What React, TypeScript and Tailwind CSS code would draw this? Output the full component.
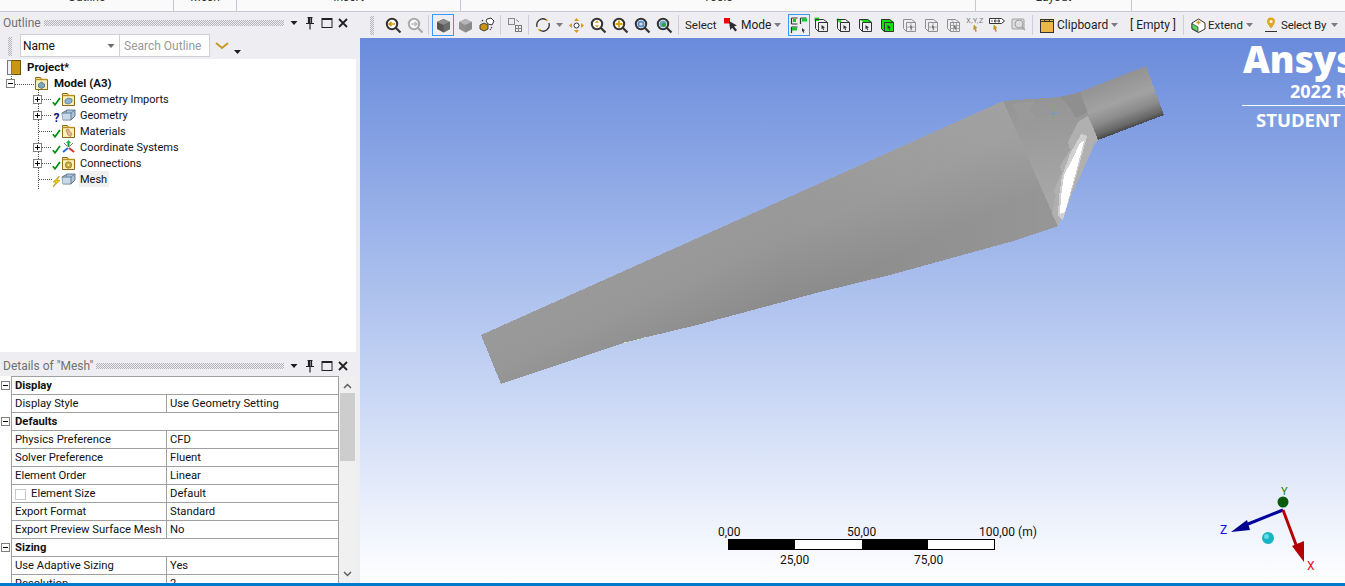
import type { ReactNode } from 'react';

const Caret = ({ color = '#1e1e1e', w = 7 }: { color?: string; w?: number }) => (
  <svg width={w} height={4} viewBox="0 0 7 4" className="shrink-0">
    <path d="M0 0h7L3.5 4z" fill={color} />
  </svg>
);

const Dots = ({ className }: { className: string }) => (
  <div
    className={`bg-[conic-gradient(#b4b4bc_25%,transparent_0_50%,#b4b4bc_0_75%,transparent_0)] bg-[length:2px_2px] ${className}`}
  />
);

const PanelHeader = ({ title, dotsWidth }: { title: string; dotsWidth: string }) => (
  <div className="flex h-[21px] shrink-0 items-center pl-[3px] text-[12px] text-[#717171]">
    <span className="whitespace-nowrap">{title}</span>
    <div className="flex-1" />
    <Dots className={`h-[6px] ${dotsWidth}`} />
    <div className="ml-[3px] flex w-[14px] justify-center">
      <Caret w={8} />
    </div>
    <svg width={16} height={14} viewBox="0 0 16 14" className="ml-[1px]">
      <path d="M5.5 1.5h5M6.5 1.5v6M9.5 1.5v6M4 7.5h8M8 7.5v6" stroke="#222" strokeWidth="1.2" fill="none" />
      <path d="M6.5 2h2v5h-2z" fill="#222" />
    </svg>
    <svg width={14} height={12} viewBox="0 0 14 12" className="ml-[2px]">
      <rect x="2" y="1.5" width="10" height="9" fill="none" stroke="#222" strokeWidth="1" />
      <path d="M2 2h10" stroke="#222" strokeWidth="2" />
    </svg>
    <svg width={12} height={12} viewBox="0 0 12 12" className="ml-[3px] mr-[11px]">
      <path d="M2 2l8 8M10 2l-8 8" stroke="#222" strokeWidth="1.8" />
    </svg>
  </div>
);

const FolderIcon = ({ children }: { children?: ReactNode }) => (
  <svg width={15} height={15} viewBox="0 0 15 15">
    <path d="M1.5 3.5V1.5h5l1 2h6v10h-12z" fill="#fbeeb8" stroke="#8a6a12" strokeWidth="1" />
    <path d="M1.5 3.5h12" stroke="#b98f1a" strokeWidth="1.4" />
    {children}
  </svg>
);

const StatusCheck = () => (
  <svg width={9} height={9} viewBox="0 0 9 9" className="mt-[6px]">
    <path d="M0.8 5.2L3 7.8 8 1" stroke="#0a8a12" strokeWidth="1.7" fill="none" />
  </svg>
);

const ModelBox = () => (
  <svg width={15} height={12} viewBox="0 0 15 12">
    <path d="M1 4l5-3h8v6l-4 4H2z" fill="#a9c3de" stroke="#5e7282" strokeWidth="0.9" />
    <path d="M1.5 4.5h8v6h-8z" fill="#c8d9ea" />
    <path d="M1 4h9v7M10 4l4-3M5.5 1.5v2" stroke="#5e7282" strokeWidth="0.8" fill="none" />
  </svg>
);

type TreeItem = { label: string; plus: boolean; status: ReactNode; icon: ReactNode; active?: boolean };

const treeItems: TreeItem[] = [
  {
    label: 'Geometry Imports',
    plus: true,
    status: <StatusCheck />,
    icon: (
      <FolderIcon>
        <path d="M4 8l3-2 4 1v3l-3 2-4-1z" fill="#8db3d4" stroke="#50708a" strokeWidth="0.7" />
      </FolderIcon>
    ),
  },
  {
    label: 'Geometry',
    plus: true,
    status: <span className="mt-[5px] text-[12px] font-bold leading-none text-[#101080]">?</span>,
    icon: <ModelBox />,
  },
  {
    label: 'Materials',
    plus: false,
    status: <StatusCheck />,
    icon: (
      <FolderIcon>
        <path d="M5 6l2-1 4 5-1.5 2.5L7 11z" fill="#e5b491" stroke="#a0714d" strokeWidth="0.6" />
      </FolderIcon>
    ),
  },
  {
    label: 'Coordinate Systems',
    plus: true,
    status: <StatusCheck />,
    icon: (
      <svg width={15} height={15} viewBox="0 0 15 15">
        <path d="M7.5 7V2" stroke="#0c9c2a" strokeWidth="2" />
        <path d="M5 3l2.5-3L10 3z" fill="#12b83a" />
        <path d="M7 8L2 12" stroke="#2a6fd6" strokeWidth="2" />
        <path d="M8 8l5 4" stroke="#d8322a" strokeWidth="2" />
        <path d="M3 3l3 3M12 3L9 6" stroke="#777" strokeWidth="1" />
      </svg>
    ),
  },
  {
    label: 'Connections',
    plus: true,
    status: <StatusCheck />,
    icon: (
      <FolderIcon>
        <circle cx="7.5" cy="9" r="3.2" fill="#c9a93c" stroke="#8a7420" strokeWidth="0.7" />
        <circle cx="7.5" cy="9" r="1" fill="#fbeeb8" />
      </FolderIcon>
    ),
  },
  {
    label: 'Mesh',
    plus: false,
    status: (
      <svg width={9} height={11} viewBox="0 0 9 11" className="mt-[5px]">
        <path d="M7.5 0L1 6h3L1 11l7-6.5H5z" fill="#f2d21e" stroke="#a68c00" strokeWidth="0.6" />
      </svg>
    ),
    icon: <ModelBox />,
    active: true,
  },
];

const ExpandBox = ({ sign }: { sign: 'plus' | 'minus' }) => (
  <span className="relative flex h-[9px] w-[9px] items-center justify-center border border-[#808080] bg-white">
    <span className="h-px w-[5px] bg-black" />
    {sign === 'plus' && <span className="absolute h-[5px] w-px bg-black" />}
  </span>
);

const Tree = () => (
  <div className="relative ml-0 h-[293px] w-[356px] bg-white text-[11px] text-[#111]">
    <svg width={80} height={130} className="absolute left-0 top-0">
      <path
        d="M11.5 15v10M15 25.5h19M38.5 31v105M42 40.5h10M42 56.5h10M38.5 72.5h13M42 88.5h10M42 104.5h10M38.5 120.5h13"
        stroke="#555"
        strokeWidth="1"
        strokeDasharray="1 1"
        shapeRendering="crispEdges"
        fill="none"
      />
    </svg>
    <div className="relative flex h-4 items-center pl-[7px]">
      <svg width={14} height={15} viewBox="0 0 14 15">
        <rect x="0.5" y="0.5" width="13" height="14" fill="#c8980f" stroke="#6b5208" />
        <rect x="0.5" y="0.5" width="4" height="14" fill="#f1f1f1" stroke="#777" />
      </svg>
      <span className="ml-[6px] text-[11.5px] font-bold leading-[17px]">Project*</span>
    </div>
    <div className="relative flex h-4 items-center pl-[6px]">
      <ExpandBox sign="minus" />
      <div className="ml-[19px]">
        <FolderIcon>
          <path d="M4.5 8l3-2 3 2v3l-3 1.5-3-1.5z" fill="#7fa4c4" stroke="#40607a" strokeWidth="0.7" />
        </FolderIcon>
      </div>
      <span className="ml-[5px] text-[11.5px] font-bold leading-[17px]">Model (A3)</span>
    </div>
    {treeItems.map((item) => (
      <div key={item.label} className="relative flex h-4 items-center">
        <div className="flex w-[52px] shrink-0 pl-[33px]">{item.plus && <ExpandBox sign="plus" />}</div>
        <div className="flex h-4 w-[9px] shrink-0 justify-center">{item.status}</div>
        <div className="flex w-[18px] shrink-0 items-center">{item.icon}</div>
        <span className={`h-4 whitespace-nowrap pl-px pr-[2px] pt-px leading-4 ${item.active ? 'bg-[#f0f0f0]' : ''}`}>
          {item.label}
        </span>
      </div>
    ))}
  </div>
);

const OutlineToolbar = () => (
  <div className="flex h-[26px] shrink-0 items-start pt-px text-[12px]">
    <Dots className="ml-[8px] mt-[3px] h-[19px] w-[4px]" />
    <div className="ml-[8px] flex h-[23px] w-[100px] items-center justify-between border border-[#cfcfd6] bg-white pl-[2px] pr-[4px] text-[#111]">
      <span>Name</span>
      <Caret color="#6d6d6d" w={8} />
    </div>
    <div className="flex h-[23px] w-[90px] items-center border border-l-0 border-[#cfcfd6] bg-white pl-[4px] text-[#9a9a9a]">
      Search Outline
    </div>
    <svg width={14} height={8} viewBox="0 0 14 8" className="ml-[5px] mt-[8px]">
      <path d="M1 1l6 5 6-5" stroke="#c8971f" strokeWidth="1.8" fill="none" />
    </svg>
    <div className="ml-[5px] mt-[16px]">
      <Caret w={7} />
    </div>
  </div>
);

const detailRows: { section?: string; label?: string; value?: string; check?: boolean }[] = [
  { section: 'Display' },
  { label: 'Display Style', value: 'Use Geometry Setting' },
  { section: 'Defaults' },
  { label: 'Physics Preference', value: 'CFD' },
  { label: 'Solver Preference', value: 'Fluent' },
  { label: 'Element Order', value: 'Linear' },
  { label: 'Element Size', value: 'Default', check: true },
  { label: 'Export Format', value: 'Standard' },
  { label: 'Export Preview Surface Mesh', value: 'No' },
  { section: 'Sizing' },
  { label: 'Use Adaptive Sizing', value: 'Yes' },
  { label: 'Resolution', value: '2' },
];

const DetailsTable = () => (
  <div className="flex min-h-0 flex-1 overflow-hidden bg-white text-[11.25px] text-[#111]">
    <div className="w-[339px] shrink-0">
      {detailRows.map((row) => (
        <div key={row.section ?? row.label} className="flex h-[18px]">
          <div className="flex w-[11px] shrink-0 items-center pl-px">
            {row.section && <ExpandBox sign="minus" />}
          </div>
          {row.section ? (
            <div className="flex flex-1 items-center border-l border-r border-t border-[#a0a0a0] pl-[3px] pt-px font-bold">
              {row.section}
            </div>
          ) : (
            <div className="flex flex-1 border-l border-r border-t border-[#a0a0a0]">
              <div className="flex w-[155px] shrink-0 items-center whitespace-nowrap border-r border-[#a0a0a0] pl-[3px] pt-px">
                {row.check && <span className="mr-[5px] h-[11px] w-[11px] border border-[#c8c8c8] bg-white" />}
                {row.label}
              </div>
              <div className="flex items-center pl-[3px] pt-px">{row.value}</div>
            </div>
          )}
        </div>
      ))}
    </div>
    <div className="flex w-[17px] shrink-0 flex-col items-center bg-[#f0f0f0]">
      <svg width={9} height={6} viewBox="0 0 9 6" className="mt-[7px]">
        <path d="M1 5l3.5-3.5L8 5" stroke="#606060" strokeWidth="1.5" fill="none" />
      </svg>
      <div className="mt-[4px] h-[68px] w-[15px] bg-[#cdcdcd]" />
      <div className="flex-1" />
      <svg width={9} height={6} viewBox="0 0 9 6" className="mb-[6px]">
        <path d="M1 1l3.5 3.5L8 1" stroke="#606060" strokeWidth="1.5" fill="none" />
      </svg>
    </div>
    <div className="flex-1 bg-[#eeeef2]" />
  </div>
);

const Btn = ({ children, selected }: { children?: ReactNode; selected?: boolean }) => (
  <div
    className={`flex h-[22px] w-[22px] shrink-0 items-center justify-center ${
      selected ? 'border border-[#3399ff]' : ''
    }`}
  >
    {children}
  </div>
);

const Sep = () => <div className="ml-[2px] mr-[3px] h-[20px] w-px shrink-0 bg-[#cccedb]" />;

const Lens = ({ children, dim }: { children?: ReactNode; dim?: boolean }) => (
  <svg width={17} height={17} viewBox="0 0 17 17">
    <circle cx="7" cy="7" r="5.2" fill="#fff" stroke={dim ? '#a8a8a8' : '#333'} strokeWidth="2" />
    <path d="M11 11l4.5 4.5" stroke={dim ? '#a8a8a8' : '#333'} strokeWidth="2.2" />
    {children}
  </svg>
);

const Cube = ({ fill = '#555', top = '#8c8c8c', side = '#6c6c6c' }: { fill?: string; top?: string; side?: string }) => (
  <svg width={15} height={15} viewBox="0 0 15 15">
    <path d="M7.5 1L14 4v7l-6.5 3.5L1 11V4z" fill={fill} />
    <path d="M7.5 1L14 4 7.5 7 1 4z" fill={top} />
    <path d="M7.5 7L14 4v7l-6.5 3.5z" fill={side} />
  </svg>
);

type FilterKind = 'vertex' | 'edge' | 'face' | 'body';

const FilterCube = ({ kind }: { kind: FilterKind }) => (
  <svg width={15} height={16} viewBox="0 0 15 16">
    {kind === 'body' && <path d="M1 2h9l4 3v10H4l-3-3z" fill="#12e012" />}
    {kind === 'face' && <path d="M1 2h9l4 3H5z" fill="#12e012" />}
    {kind === 'edge' && <path d="M1 2l4 3" stroke="#12e012" strokeWidth="2.4" />}
    {kind === 'vertex' && <rect x="0.5" y="0.5" width="4.5" height="3.5" fill="#12e012" />}
    <path d="M1.5 2.5h8l4 3v9h-9l-3-3zM4.5 5.5h9M4.5 5.5v9" fill="none" stroke="#333" strokeWidth="1" />
    <path d="M7.5 8l3.5 2.5-1.6.4.8 2-.9.3-.8-2-1 1z" fill="#333" />
  </svg>
);

const MeshCube = ({ lines = 1 }: { lines?: number }) => (
  <svg width={15} height={16} viewBox="0 0 15 16">
    <path d="M1.5 2.5h8l4 3v9h-9l-3-3zM4.5 5.5h9M4.5 5.5v9" fill="none" stroke="#8f8f8f" strokeWidth="1" />
    <path
      d={lines === 1 ? 'M9 5.5v9M4.5 10h9' : 'M7.5 5.5v9M10.5 5.5v9M4.5 8.5h9M4.5 11.5h9M5 2.5l3 3'}
      fill="none"
      stroke="#a0a0a0"
      strokeWidth="0.9"
    />
    <path d="M8 8l3 2.5-1.4.3.7 1.8-.8.3-.7-1.8-.8.8z" fill="#777" />
  </svg>
);

const Arrowish = ({ x }: { x: number }) => (
  <path d={`M${x} 8l3 3-1.3.3.8 3-1 .4-.9-3-1 .9z`} fill="#d69a10" stroke="#8a6200" strokeWidth="0.3" />
);

const MainToolbar = () => (
  <div className="flex h-[26px] shrink-0 items-center whitespace-nowrap text-[12px] text-[#1e1e1e]">
    <Dots className="ml-[10px] mr-[8px] h-[19px] w-[4px] shrink-0" />
    <Btn>
      <Lens>
        <path d="M10 7H4.5M6.5 4.8L4 7l2.5 2.2" stroke="#d99a12" strokeWidth="1.7" fill="none" />
      </Lens>
    </Btn>
    <Btn>
      <Lens dim>
        <path d="M4 7h5.5M7.5 4.8L10 7 7.5 9.2" stroke="#bdbdbd" strokeWidth="1.7" fill="none" />
      </Lens>
    </Btn>
    <Sep />
    <Btn selected>
      <Cube />
    </Btn>
    <Btn>
      <Cube fill="#909090" top="#b5b5b5" side="#8a8a8a" />
    </Btn>
    <Btn>
      <svg width={16} height={16} viewBox="0 0 16 16">
        <path d="M1 8l4-2 4 2v4l-4 2-4-2z" fill="#c8940f" stroke="#333" strokeWidth="0.9" />
        <path d="M8 2l4-1 3 3-2 4-4-1-2-3z" fill="#fff" stroke="#333" strokeWidth="1" />
        <path d="M4 3L2 5M13 10l-2 3" stroke="#333" strokeWidth="1.2" strokeDasharray="1.5 1" />
      </svg>
    </Btn>
    <Sep />
    <Btn>
      <svg width={16} height={16} viewBox="0 0 16 16">
        <rect x="1.5" y="1.5" width="6" height="6" fill="none" stroke="#888" />
        <rect x="8.5" y="8.5" width="6" height="6" fill="none" stroke="#777" />
        <path d="M8.5 11.5h6M11.5 8.5v6M9 2.5l3 2.5" stroke="#888" fill="none" />
      </svg>
    </Btn>
    <Sep />
    <Btn>
      <svg width={16} height={16} viewBox="0 0 16 16">
        <path d="M2.2 10A6 6 0 0 1 11 2.8" stroke="#333" strokeWidth="1.3" fill="none" />
        <path d="M13.8 6A6 6 0 0 1 5 13.2" stroke="#333" strokeWidth="1.3" fill="none" />
        <path d="M11 1.5l2.5 2-3 .8zM5 14.5l-2.5-2 3-.8z" fill="#d99a12" />
      </svg>
    </Btn>
    <div className="flex w-[11px] shrink-0 justify-center">
      <Caret color="#7b7b88" />
    </div>
    <Btn>
      <svg width={15} height={15} viewBox="0 0 15 15">
        <path d="M7.5 0l2.5 3H5zM7.5 15L5 12h5zM0 7.5L3 5v5zM15 7.5L12 5v5z" fill="#d99a12" />
        <circle cx="7.5" cy="7.5" r="2.5" fill="#fff" stroke="#333" strokeWidth="1" />
      </svg>
    </Btn>
    <Btn>
      <Lens>
        <path d="M7 3.5L5 5.8h4zM7 10.5L5 8.2h4z" fill="#d99a12" />
      </Lens>
    </Btn>
    <Btn>
      <Lens>
        <path d="M7 3.5v7M3.5 7h7" stroke="#e0a010" strokeWidth="2.2" />
      </Lens>
    </Btn>
    <Btn>
      <Lens>
        <circle cx="7" cy="7" r="3.6" fill="#5b8fc7" />
        <circle cx="7" cy="7" r="1.6" fill="#cfe0ef" />
      </Lens>
    </Btn>
    <Btn>
      <Lens>
        <circle cx="7" cy="7" r="3.6" fill="#6aa7c9" />
        <circle cx="7.8" cy="7.8" r="2" fill="#2ea12e" />
      </Lens>
    </Btn>
    <div className="ml-[3px] mr-[6px] h-[20px] w-px shrink-0 bg-[#cccedb]" />
    <span className="w-[32px] shrink-0 pt-px text-[11.5px]">Select</span>
    <svg width={15} height={14} viewBox="0 0 15 14" className="ml-[7px] shrink-0">
      <rect x="0" y="0" width="6" height="5.5" fill="#f00000" />
      <path d="M5 3l8 4.5-3 1 3 3.5-1.8 1.5-3-3.7-2 2.2z" fill="#2c2c2c" />
    </svg>
    <span className="ml-[2px] w-[30px] shrink-0">Mode</span>
    <div className="ml-[3px] mr-[7px] shrink-0">
      <Caret color="#7b7b88" />
    </div>
    <Btn selected>
      <svg width={18} height={18} viewBox="0 0 18 18">
        <path d="M1.5 2h6M1.5 2v6M1.5 8h6M10.5 2h6M10.5 2v6M1.5 11h6M1.5 11v6" stroke="#333" strokeWidth="1.2" fill="none" />
        <path d="M3 3h3v3H3zM12 2.5h5v3h-5zM2 11.5h5v3H2z" fill="#12c82a" />
        <path d="M12 12l3 2.5-1.3.3.6 1.8-.8.3-.6-1.8-.9.8z" fill="#333" />
      </svg>
    </Btn>
    <Btn>
      <FilterCube kind="vertex" />
    </Btn>
    <Btn>
      <FilterCube kind="edge" />
    </Btn>
    <Btn>
      <FilterCube kind="face" />
    </Btn>
    <Btn>
      <FilterCube kind="body" />
    </Btn>
    <Btn>
      <MeshCube />
    </Btn>
    <Btn>
      <MeshCube />
    </Btn>
    <Btn>
      <MeshCube lines={2} />
    </Btn>
    <Btn>
      <div className="relative flex h-[16px] w-[16px] justify-center">
        <span className="text-[7px] leading-[9px] tracking-[0.5px] text-[#777]">X,Y,Z</span>
        <svg width={16} height={16} viewBox="0 0 16 16" className="absolute left-0 top-0">
          <Arrowish x={7} />
        </svg>
      </div>
    </Btn>
    <Btn>
      <svg width={16} height={16} viewBox="0 0 16 16">
        <path d="M0.5 1.5h12l3 2.5-3 2.5h-12z" fill="#fff" stroke="#333" strokeWidth="1" />
        <path d="M3 3v2M5.5 3h1.5v2h-1.5zM9 3h1.5v2H9z" stroke="#333" strokeWidth="0.8" fill="none" />
        <Arrowish x={5} />
      </svg>
    </Btn>
    <Btn>
      <svg width={16} height={16} viewBox="0 0 16 16">
        <rect x="1" y="2" width="12" height="10" rx="1" fill="#ddd" stroke="#a0a0a0" />
        <circle cx="8" cy="7" r="4" fill="none" stroke="#a0a0a0" />
        <path d="M11 10l3 3" stroke="#a0a0a0" strokeWidth="1.6" />
      </svg>
    </Btn>
    <Sep />
    <svg width={14} height={15} viewBox="0 0 14 15" className="ml-[4px] shrink-0">
      <rect x="0.5" y="1.5" width="13" height="13" fill="#e8b94a" stroke="#333" />
      <path d="M0.5 3.5h13M4.5 1.5h5v2h-5z" stroke="#333" fill="#d2a030" />
    </svg>
    <span className="ml-[3px] w-[52px] shrink-0">Clipboard</span>
    <div className="ml-[2px] shrink-0">
      <Caret color="#7b7b88" />
    </div>
    <span className="ml-[12px] w-[47px] shrink-0">[ Empty ]</span>
    <div className="ml-[6px] h-[20px] w-px shrink-0 bg-[#cccedb]" />
    <svg width={15} height={15} viewBox="0 0 15 15" className="ml-[7px] shrink-0">
      <path d="M1 5l6.5-4L14 5v6l-6.5 3.5L1 11z" fill="#fff" stroke="#333" strokeWidth="1" />
      <path d="M1 5.5l6 3.5v5l-6-3.5z" fill="#5fd35f" stroke="#333" strokeWidth="0.7" />
      <path d="M7.5 2.5v4M5.5 4.5h4" stroke="#d99a12" strokeWidth="1.3" />
    </svg>
    <span className="ml-[2px] w-[36px] shrink-0 pt-px text-[11.5px]">Extend</span>
    <div className="ml-[2px] shrink-0">
      <Caret color="#7b7b88" />
    </div>
    <svg width={14} height={16} viewBox="0 0 14 16" className="ml-[11px] shrink-0">
      <path d="M7 0.5a4 4 0 0 1 4 4c0 2.5-4 7-4 7s-4-4.5-4-7a4 4 0 0 1 4-4z" fill="#e0a81e" />
      <circle cx="7" cy="4.5" r="1.5" fill="#fff" />
      <path d="M1 14.5h12" stroke="#333" strokeWidth="1" />
    </svg>
    <span className="ml-[3px] w-[48px] shrink-0 pt-px text-[11.5px] tracking-[-0.2px]">Select By</span>
    <div className="ml-[2px] shrink-0">
      <Caret color="#7b7b88" />
    </div>
  </div>
);

// geometry of the blade, in page coordinates
const BladeModel = () => (
  <svg width={985} height={545} viewBox="360 38 985 545" className="absolute left-0 top-0" shapeRendering="crispEdges">
    <defs>
      <linearGradient id="body" gradientUnits="userSpaceOnUse" x1="700" y1="190" x2="760" y2="320">
        <stop offset="0" stopColor="#9c9c9c" />
        <stop offset="0.55" stopColor="#979797" />
        <stop offset="1" stopColor="#8a8a8a" />
      </linearGradient>
      <linearGradient id="bodyLight" gradientUnits="userSpaceOnUse" x1="780" y1="0" x2="1040" y2="0">
        <stop offset="0" stopColor="#ffffff" stopOpacity="0" />
        <stop offset="1" stopColor="#ffffff" stopOpacity="0.1" />
      </linearGradient>
      <linearGradient id="cone" gradientUnits="userSpaceOnUse" x1="1040" y1="100" x2="1050" y2="200">
        <stop offset="0" stopColor="#959595" />
        <stop offset="0.5" stopColor="#9e9e9e" />
        <stop offset="1" stopColor="#a8a8a8" />
      </linearGradient>
      <linearGradient id="neck" gradientUnits="userSpaceOnUse" x1="1113" y1="79" x2="1131" y2="128">
        <stop offset="0" stopColor="#939393" />
        <stop offset="0.45" stopColor="#a2a2a2" />
        <stop offset="0.7" stopColor="#8c8c8c" />
        <stop offset="0.9" stopColor="#686868" />
        <stop offset="1" stopColor="#474747" />
      </linearGradient>
    </defs>
    <path
      d="M481 335L787 198 1003 101 1058 226 1017 240 890 275 820 292 697 325 647 337 620 344 501 384z"
      fill="url(#body)"
    />
    <path d="M780 200L1003 101 1058 226 1017 240 890 275 820 292 780 303z" fill="url(#bodyLight)" />
    <path d="M1003 101L1060 97 1080 92 1098 140 1095 143 1058 226z" fill="url(#cone)" />
    <path d="M1012 104L1034 101 1030 112 1036 116 1028 124 1032 134 1024 130 1020 118z" fill="#9a9a9a" />
    <path d="M1060 97L1080 92 1088 112 1076 118 1070 108z" fill="#8f8f8f" />
    <path d="M1078 122L1088 116 1098 140 1095 143 1058 226 1052 214 1056 196 1054 190 1062 172 1060 166 1070 150 1068 142z" fill="#b0b0b0" />
    <path d="M1081 134L1087 136 1077 173 1063 220 1058 216 1059 196 1062 176 1070 154z" fill="#d0d0d0" />
    <path d="M1080 143L1084 141 1076 172 1065 212 1060 214 1061 197 1064 175 1072 160z" fill="#ffffff" />
    <path d="M1080 92L1146 66 1164 115 1098 140z" fill="url(#neck)" />
    <path d="M1049 113h9M1053.5 108v10" stroke="#7894d8" strokeWidth="1" fill="none" />
    <path d="M621 343L641 339 646 337 625 343z" fill="#d9f0b4" />
  </svg>
);

const Triad = () => (
  <svg width={110} height={90} viewBox="1220 485 110 90" className="absolute left-[860px] top-[447px]">
    <path d="M1283 510L1243 526" stroke="#00009c" strokeWidth="3" />
    <path d="M1231 532L1247 520 1250 530z" fill="#000090" />
    <path d="M1283 510L1298 550" stroke="#b40000" strokeWidth="3" />
    <path d="M1304 562L1292 546 1304 541z" fill="#b40000" />
    <circle cx="1283" cy="502" r="5.5" fill="#0b5a0b" />
    <circle cx="1268" cy="538" r="6" fill="#16b5c4" />
    <circle cx="1266.5" cy="536.5" r="2.5" fill="#62dbe4" />
  </svg>
);

const Viewport = () => (
  <div className="relative min-h-0 flex-1 overflow-hidden bg-linear-to-b from-[#6a8bdb] to-white">
    <BladeModel />
    <div className="absolute left-[883px] top-[3px] whitespace-nowrap font-['Open_Sans',sans-serif] text-[37px] font-extrabold leading-[36px] text-white">
      Ansys
    </div>
    <div className="absolute left-[930px] top-[41px] whitespace-nowrap font-['Open_Sans',sans-serif] text-[18px] font-bold leading-[24px] text-white">
      2022 R1
    </div>
    <div className="absolute left-[882px] right-0 top-[67px] h-px bg-white" />
    <div className="absolute left-[896px] top-[70px] whitespace-nowrap font-['Open_Sans',sans-serif] text-[18.5px] font-bold leading-[24px] text-white">
      STUDENT
    </div>

    <div className="absolute left-[358px] top-[486px] w-[320px] text-[12px] text-[#111]">
      <div className="relative h-[15px]">
        <span className="absolute left-0 leading-4">0,00</span>
        <span className="absolute left-[129px] leading-4">50,00</span>
        <span className="absolute left-[261px] leading-4">100,00 (m)</span>
      </div>
      <div className="ml-[10px] flex h-[11px] w-[267px] border border-black">
        <div className="flex-1 bg-black" />
        <div className="flex-1 bg-white" />
        <div className="flex-1 bg-black" />
        <div className="flex-1 bg-white" />
      </div>
      <div className="relative h-[16px] pt-[2px]">
        <span className="absolute left-[62px] top-[2px] leading-4">25,00</span>
        <span className="absolute left-[196px] top-[2px] leading-4">75,00</span>
      </div>
    </div>

    <Triad />
    <span className="absolute left-[921px] top-[446px] text-[11px] leading-4 text-[#0a8a0a]">Y</span>
    <span className="absolute left-[860px] top-[484px] text-[12px] leading-4 text-[#1010f0]">Z</span>
    <span className="absolute left-[947px] top-[520px] text-[12px] leading-4 text-[#e01010]">X</span>
  </div>
);

export default function App() {
  return (
    <div className="flex h-[586px] w-[1345px] flex-col overflow-hidden bg-[#eeeef2] font-['Roboto','Open_Sans',sans-serif] text-[11.5px]">
      <div className="flex h-[12px] shrink-0 overflow-hidden border-b border-[#c8c8d0] bg-[#fafafa] text-[12px] text-[#333]">
        {[
          { name: 'Outline', w: 'w-[174px]' },
          { name: 'Mesh', w: 'w-[63px]' },
          { name: 'Insert', w: 'w-[224px]' },
          { name: 'Tools', w: 'w-[515px]' },
          { name: 'Layout', w: 'w-[156px]' },
        ].map((tab) => (
          <div key={tab.name} className={`flex h-[11px] items-start justify-center border-r border-[#c8c8d0] ${tab.w}`}>
            <span className="leading-[16px] -translate-y-[11px]">{tab.name}</span>
          </div>
        ))}
      </div>
      <div className="flex min-h-0 flex-1">
        <div className="flex w-[360px] shrink-0 flex-col">
          <PanelHeader title="Outline" dotsWidth="w-[240px]" />
          <OutlineToolbar />
          <Tree />
          <div className="mt-[3px]">
            <PanelHeader title={'Details of "Mesh"'} dotsWidth="w-[188px]" />
          </div>
          <DetailsTable />
        </div>
        <div className="flex min-w-0 flex-1 flex-col">
          <MainToolbar />
          <Viewport />
        </div>
      </div>
      <div className="h-[3px] shrink-0 bg-[#007acc]" />
    </div>
  );
}
